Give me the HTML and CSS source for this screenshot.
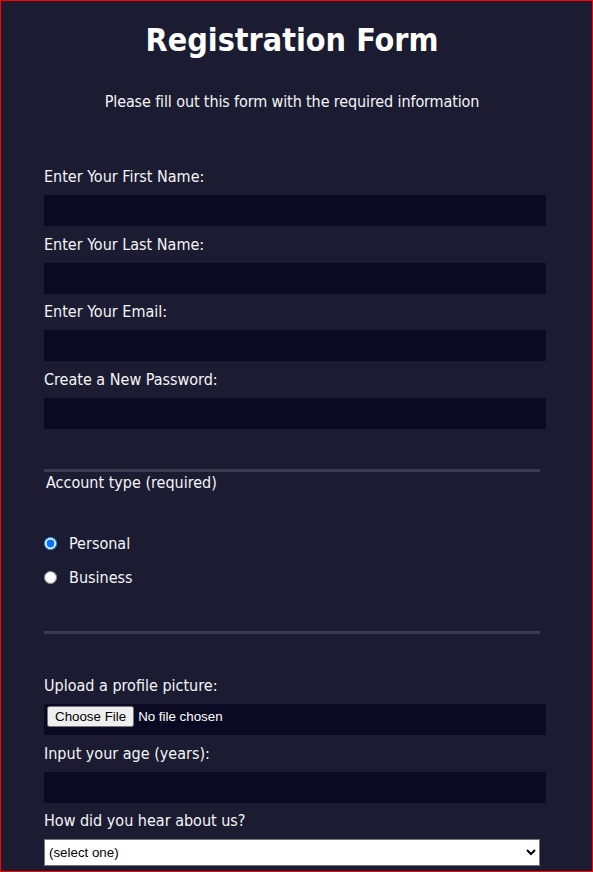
FILE: index.html
```html
<!DOCTYPE html>
<html lang="en">
<head>
<meta charset="utf-8">
<title>Registration Form</title>
<link rel="stylesheet" href="styles.css">
</head>
<body>
<div class="frame">
  <h1 class="title">Registration Form</h1>
  <p class="lead">Please fill out this form with the required information</p>
  <form class="reg-form">
    <fieldset class="group group-first">
      <label class="field">Enter Your First Name: <input class="text-input" type="text"></label>
      <label class="field">Enter Your Last Name: <input class="text-input" type="text"></label>
      <label class="field">Enter Your Email: <input class="text-input" type="email"></label>
      <label class="field">Create a New Password: <input class="text-input" type="password"></label>
    </fieldset>
    <fieldset class="group group-radio">
      <legend class="legend">Account type (required)</legend>
      <div class="radios">
        <label class="radio-row"><input class="radio" type="radio" name="acct" checked> Personal</label>
        <label class="radio-row"><input class="radio" type="radio" name="acct"> Business</label>
      </div>
    </fieldset>
    <fieldset class="group group-last">
      <label class="field">Upload a profile picture: <input class="file-input" type="file"></label>
      <label class="field">Input your age (years): <input class="text-input" type="number"></label>
      <label class="field">How did you hear about us?
        <select class="select">
          <option>(select one)</option>
          <option>freeCodeCamp News</option>
          <option>freeCodeCamp YouTube Channel</option>
          <option>freeCodeCamp Forum</option>
          <option>Other</option>
        </select>
      </label>
    </fieldset>
  </form>
</div>
</body>
</html>
```

FILE: styles.css
```css
html, body {
  margin: 0;
  padding: 0;
}
body {
  background: #1b1b32;
  color: #f5f6f7;
  font-family: "DejaVu Sans Condensed", "DejaVu Sans", sans-serif;
  font-stretch: condensed;
  font-size: 16px;
}
.frame {
  width: 593px;
  height: 872px;
  box-sizing: border-box;
  border: 1px solid #ff0000;
  padding-right: 9px;
  overflow: hidden;
  display: flex;
  flex-direction: column;
}
.title {
  margin: 20px 0 0;
  font-size: 32px;
  line-height: 38px;
  font-weight: bold;
  text-align: center;
  color: #ffffff;
}
.lead {
  margin: 33px 0 0;
  line-height: 19px;
  text-align: center;
  letter-spacing: -0.12px;
}
.reg-form {
  width: 496px;
  margin: 16px auto 0;
}
.group {
  margin: 0;
  border: none;
  border-bottom: 3px solid #3b3b4f;
  padding: 0;
  min-width: 0;
}
.group-first {
  padding: 40px 0 40px;
  display: flex;
  flex-direction: column;
  gap: 8.7px;
}
.group-last {
  padding: 42.5px 0 20px;
  display: flex;
  flex-direction: column;
  gap: 8.7px;
}
.field {
  display: flex;
  flex-direction: column;
  gap: 9px;
  line-height: 19px;
}
.text-input {
  display: block;
  width: calc(100% + 6px);
  height: 31px;
  box-sizing: border-box;
  margin: 0;
  padding: 1px 2px;
  background: #0a0a23;
  border: 1px solid #0a0a23;
  color: #ffffff;
  font-family: inherit;
  font-size: 13px;
  border-radius: 0;
  outline: none;
}
.file-input {
  display: block;
  width: calc(100% + 6px);
  height: 31px;
  box-sizing: border-box;
  margin: 0;
  padding: 1px 2px;
  background: #0a0a23;
  border: 1px solid #0a0a23;
  color: #ffffff;
  font-family: "Liberation Sans", Arial, sans-serif;
  font-size: 13.33px;
}
.select {
  display: block;
  width: 100%;
  height: 27px;
  margin: 0;
  font-family: "Liberation Sans", Arial, sans-serif;
  font-size: 13.33px;
  color: #000000;
  background: #ffffff;
}
.legend {
  padding: 1px 2px 0;
  line-height: 19px;
}
.radios {
  padding: 41.5px 0 44px;
  display: flex;
  flex-direction: column;
  gap: 15px;
}
.radio-row {
  display: flex;
  align-items: center;
  line-height: 19px;
}
.radio {
  width: 13px;
  height: 13px;
  margin: 0 12px 0 0;
}
```
